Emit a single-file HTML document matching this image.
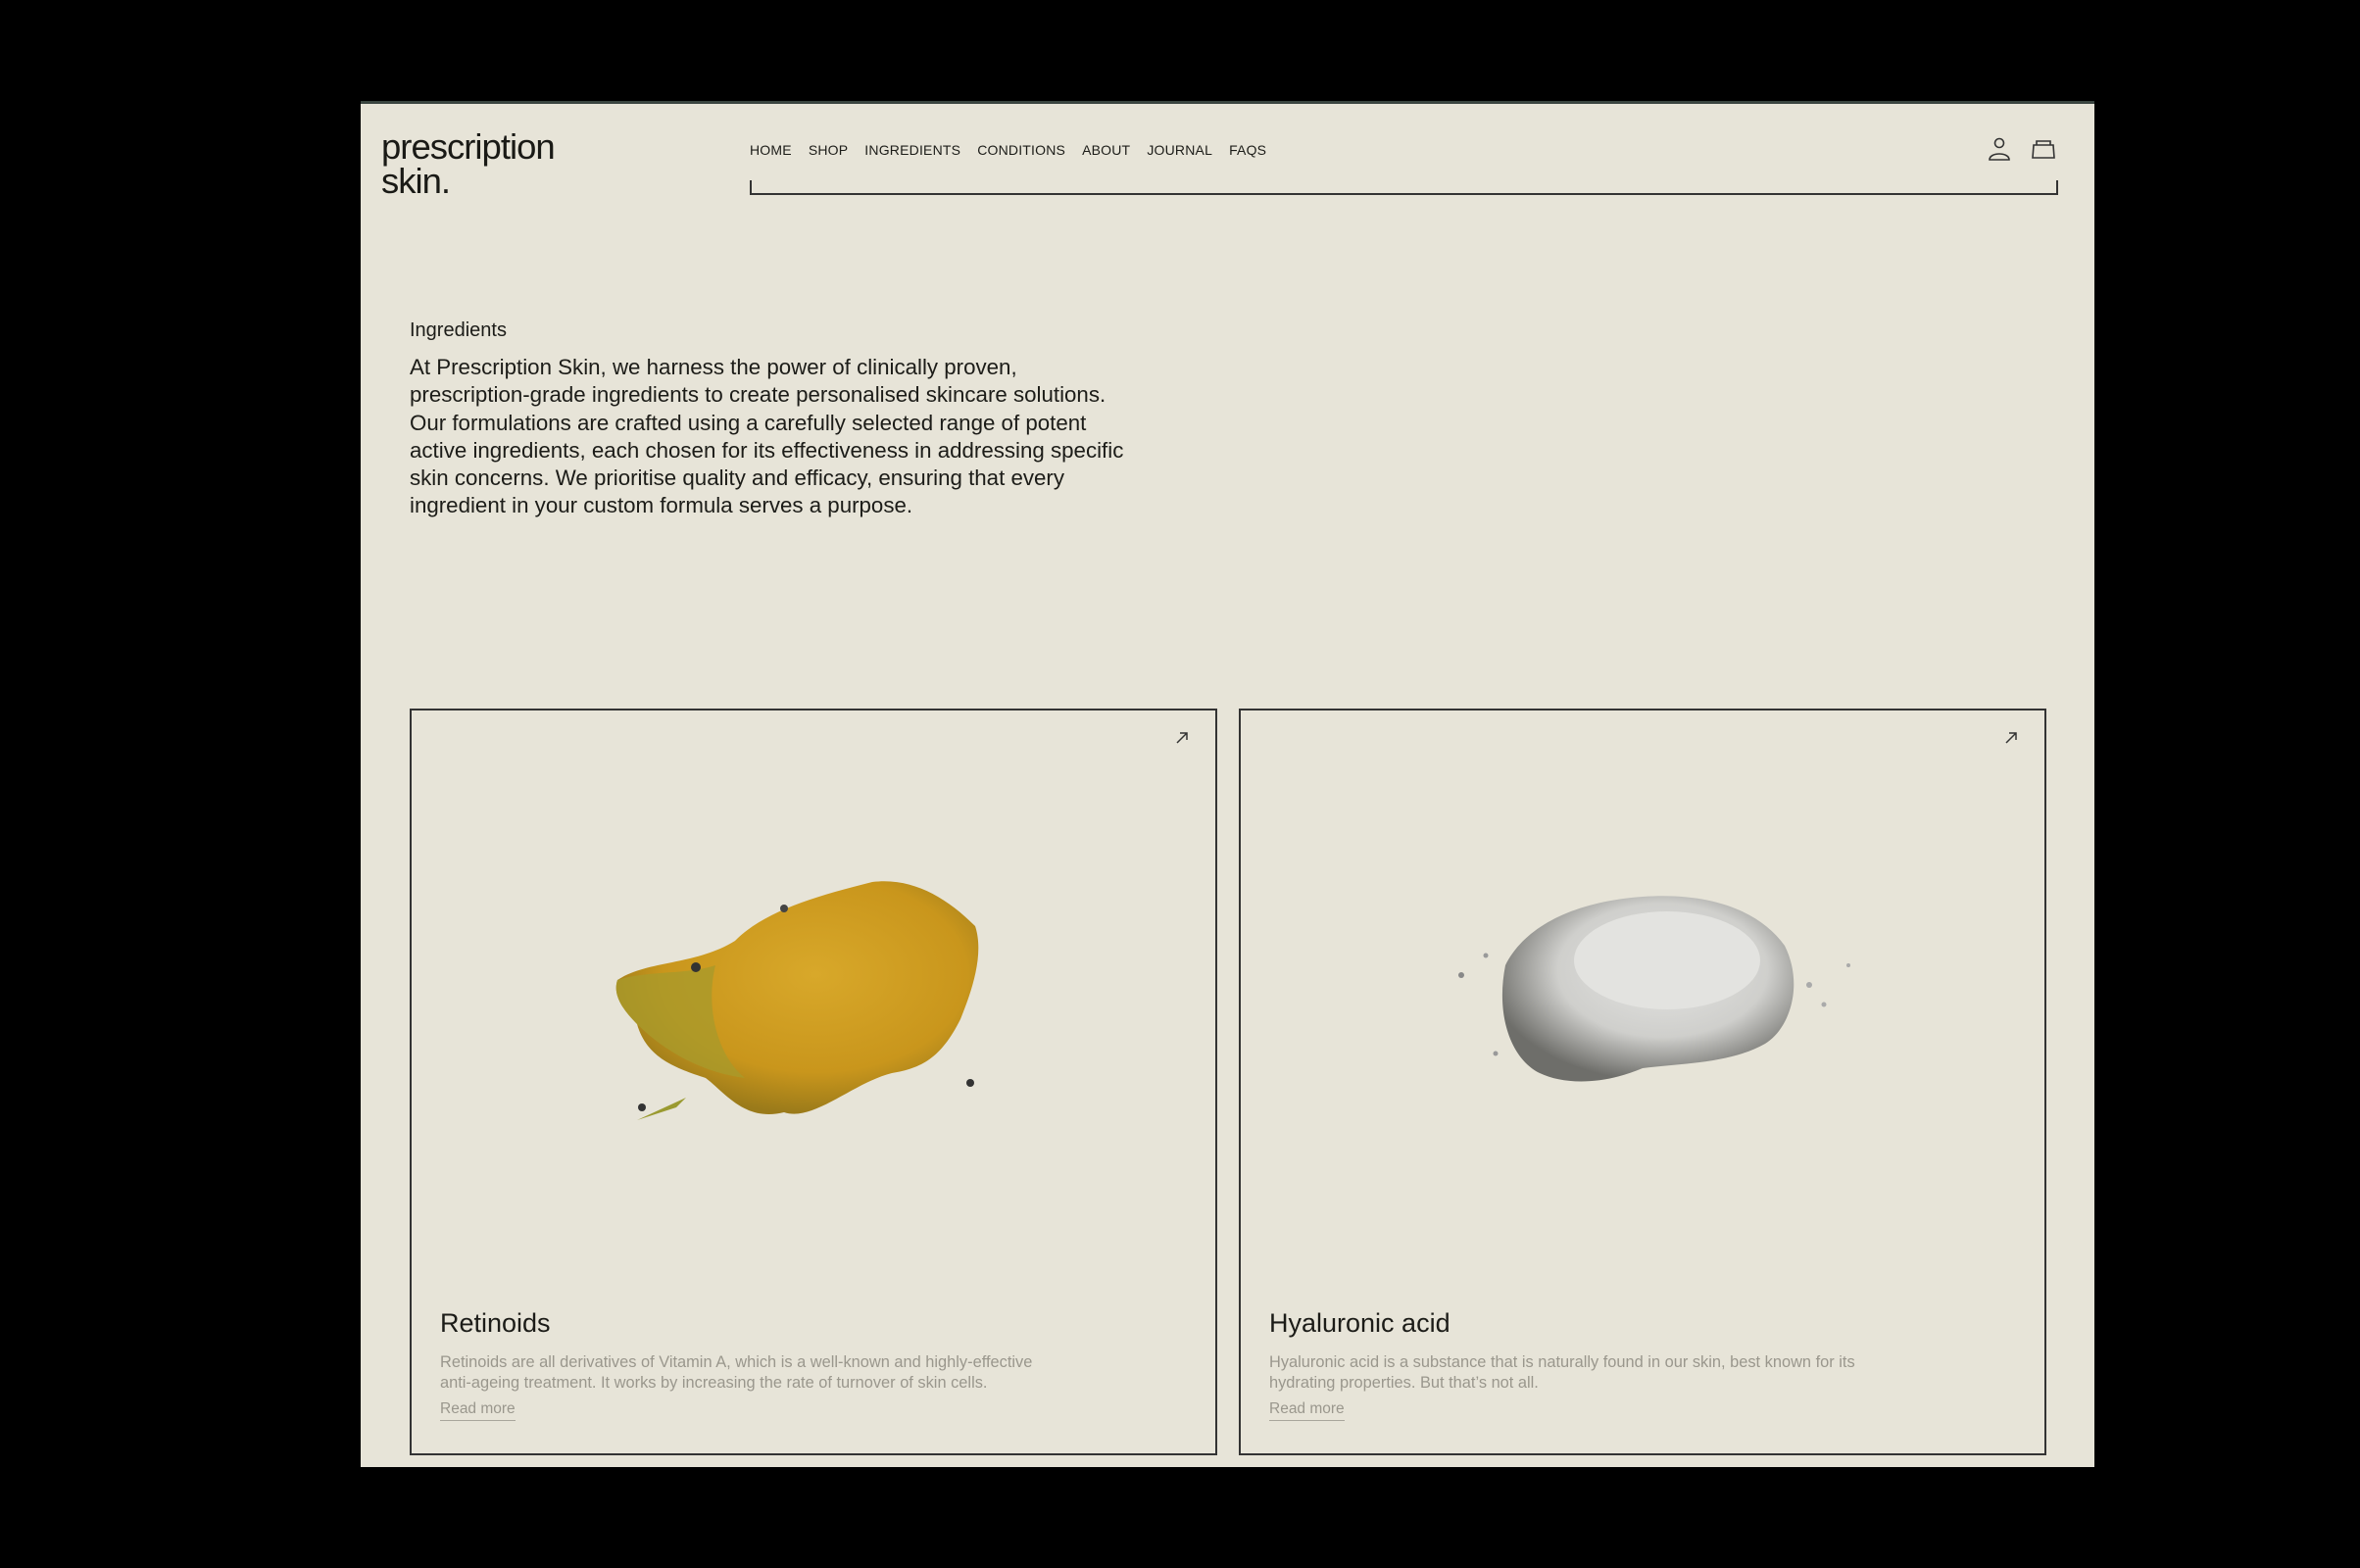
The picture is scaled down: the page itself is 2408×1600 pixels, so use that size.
<!DOCTYPE html>
<html><head><meta charset="utf-8"><style>
*{margin:0;padding:0;box-sizing:border-box}
body{width:2408px;height:1600px;background:#000;position:relative;overflow:hidden;font-family:"Liberation Sans",sans-serif;color:#1c1c18}
.page{position:absolute;left:368px;top:103px;width:1769px;height:1394px;background:#e7e4d8;border-top:3px solid #3a4540}
.abs{position:absolute}
.logo{left:21px;top:26px;font-size:36.5px;line-height:35px;letter-spacing:-1px;color:#1a1a16}
.nav{top:39px;left:397px;font-size:14px;letter-spacing:0.2px;white-space:nowrap}
.nav span{margin-right:17px}
.bracket{left:397px;top:78px;width:1335px;height:15px;border:2px solid #333;border-top:none}
.label{left:50px;top:220px;font-size:20px}
.para{left:50px;top:255px;width:800px;font-size:22.3px;line-height:28.3px;white-space:nowrap}
.card{top:617px;width:824px;height:762px;border:2px solid #333}
.arrow{right:26px;top:20px}
.title{left:29px;top:610px;font-size:27px}
.desc{left:29px;top:655px;font-size:16.4px;line-height:21px;color:#9a978d;white-space:nowrap}
.more{left:29px;top:704px;font-size:15.5px;color:#9a978d;border-bottom:1.5px solid #a9a69c;padding-bottom:2px}
</style></head><body>
<div class="page">
<div class="abs logo">prescription<br>skin.</div>
<div class="abs nav"><span>HOME</span><span>SHOP</span><span>INGREDIENTS</span><span>CONDITIONS</span><span>ABOUT</span><span>JOURNAL</span><span>FAQS</span></div>
<div class="abs bracket"></div>
<svg class="abs" style="left:1660px;top:33px" width="24" height="26" viewBox="0 0 24 26" fill="none" stroke="#333" stroke-width="1.6"><circle cx="12" cy="7" r="4.5"/><path d="M2 24 C2 16 22 16 22 24 Z"/></svg>
<svg class="abs" style="left:1704px;top:35px" width="26" height="22" viewBox="0 0 26 22" fill="none" stroke="#333" stroke-width="1.6"><path d="M3 7 H23 L24 20 H2 Z"/><path d="M6 7 V3 H20 V7"/></svg>
<div class="abs label">Ingredients</div>
<div class="abs para">At Prescription Skin, we harness the power of clinically proven,<br>prescription-grade ingredients to create personalised skincare solutions.<br>Our formulations are crafted using a carefully selected range of potent<br>active ingredients, each chosen for its effectiveness in addressing specific<br>skin concerns. We prioritise quality and efficacy, ensuring that every<br>ingredient in your custom formula serves a purpose.</div>

<div class="abs card" style="left:50px">
<svg class="abs arrow" width="16" height="16" viewBox="0 0 16 16" fill="none" stroke="#333" stroke-width="1.5"><path d="M3 13 L13 3 M6 3 H13 V10"/></svg>
<svg class="abs" style="left:190px;top:150px" width="420" height="290" viewBox="0 0 420 290">
<defs><radialGradient id="y" cx="0.55" cy="0.4" r="0.6"><stop offset="0" stop-color="#d8a82a"/><stop offset="0.7" stop-color="#c9961c"/><stop offset="1" stop-color="#9a7a1a"/></radialGradient></defs>
<path d="M20 125 C50 105 100 110 140 85 C170 55 220 40 280 25 C320 20 355 40 385 70 C395 100 380 140 370 165 C350 205 330 215 300 220 C260 230 220 270 190 260 C150 270 130 240 110 225 C80 215 50 205 40 170 C25 155 15 140 20 125 Z" fill="url(#y)"/>
<path d="M20 125 C50 115 90 120 120 110 C110 150 120 200 150 225 C110 220 70 200 40 170 C25 155 15 140 20 125Z" fill="#a99a2a" opacity="0.8"/>
<circle cx="100" cy="112" r="5" fill="#333"/><circle cx="190" cy="52" r="4" fill="#444"/><circle cx="45" cy="255" r="4" fill="#333"/><circle cx="380" cy="230" r="4" fill="#333"/>
<path d="M40 268 L90 245 L80 255 Z" fill="#9a9a30"/>
</svg>
<div class="abs title">Retinoids</div>
<div class="abs desc">Retinoids are all derivatives of Vitamin A, which is a well-known and highly-effective<br>anti-ageing treatment. It works by increasing the rate of turnover of skin cells.</div>
<div class="abs more">Read more</div>
</div>

<div class="abs card" style="left:896px">
<svg class="abs arrow" width="16" height="16" viewBox="0 0 16 16" fill="none" stroke="#333" stroke-width="1.5"><path d="M3 13 L13 3 M6 3 H13 V10"/></svg>
<svg class="abs" style="left:190px;top:150px" width="460" height="270" viewBox="0 0 460 270">
<defs><radialGradient id="w" cx="0.55" cy="0.4" r="0.6"><stop offset="0" stop-color="#e4e4e2"/><stop offset="0.6" stop-color="#cfcfcc"/><stop offset="1" stop-color="#6e6e6a"/></radialGradient></defs>
<path d="M80 110 C100 70 150 45 220 40 C290 35 340 55 365 90 C385 130 370 175 345 190 C310 210 260 210 220 215 C180 232 140 232 115 220 C85 205 70 160 80 110 Z" fill="url(#w)"/>
<ellipse cx="245" cy="105" rx="95" ry="50" fill="#e3e3e0"/>
<circle cx="35" cy="120" r="3" fill="#888"/><circle cx="60" cy="100" r="2.5" fill="#999"/><circle cx="390" cy="130" r="3" fill="#aaa"/><circle cx="405" cy="150" r="2.5" fill="#aaa"/><circle cx="430" cy="110" r="2" fill="#aaa"/><circle cx="70" cy="200" r="2.5" fill="#999"/>
</svg>
<div class="abs title">Hyaluronic acid</div>
<div class="abs desc">Hyaluronic acid is a substance that is naturally found in our skin, best known for its<br>hydrating properties. But that’s not all.</div>
<div class="abs more">Read more</div>
</div>
</div>
</body></html>
